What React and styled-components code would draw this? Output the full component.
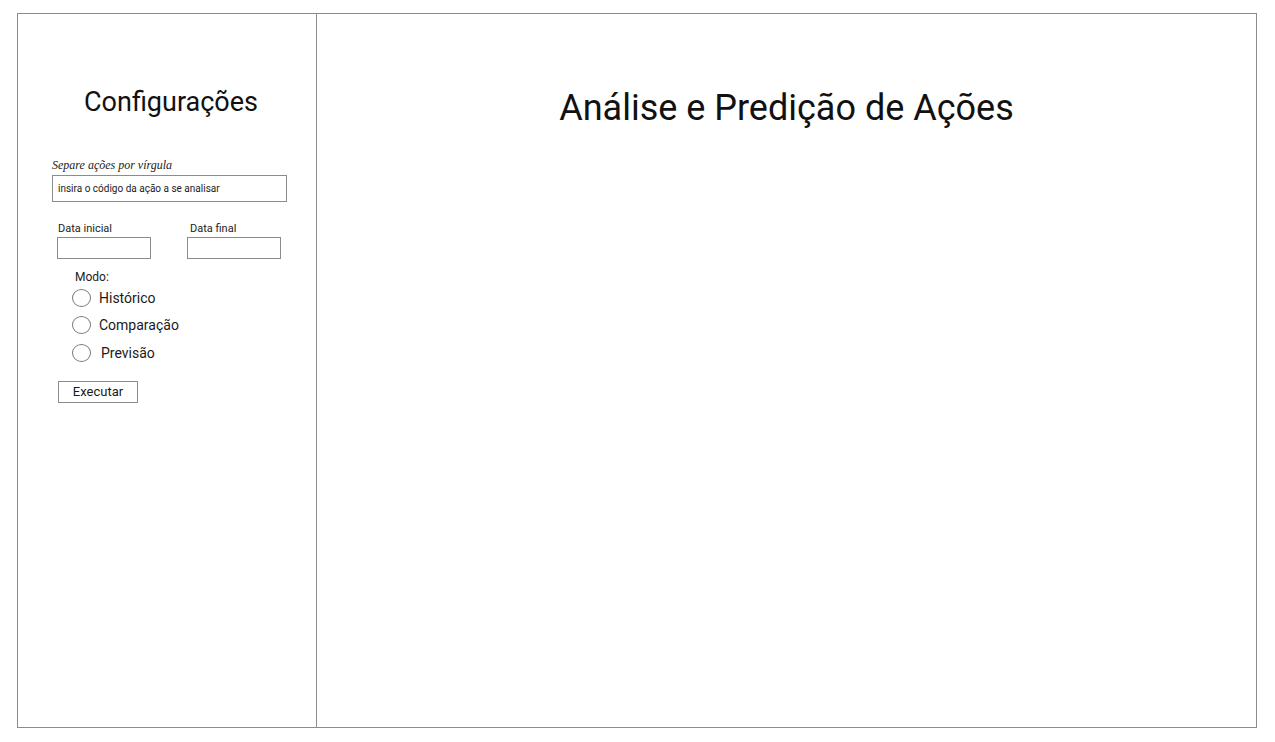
import React from "react";
import styled, { createGlobalStyle } from "styled-components";

const GlobalStyle = createGlobalStyle`
  html, body {
    margin: 0;
    padding: 0;
    background: #fff;
  }
  body {
    font-family: Roboto, "Liberation Sans", sans-serif;
    color: #1a1a1a;
  }
`;

const Frame = styled.div`
  box-sizing: border-box;
  margin: 13px 0 0 17px;
  width: 1240px;
  height: 715px;
  border: 1px solid #8c8c8c;
  display: flex;
`;

const Sidebar = styled.aside`
  box-sizing: border-box;
  width: 299px;
  flex-shrink: 0;
  border-right: 1px solid #8c8c8c;
  padding-top: 73px;
  display: flex;
  flex-direction: column;
`;

const Main = styled.main`
  flex: 1;
  padding-top: 73px;
`;

const SideTitle = styled.h2`
  margin: 0 0 41px 0;
  padding-left: 8px;
  font-weight: 400;
  font-size: 27px;
  line-height: 31px;
  text-align: center;
  color: #111;
`;

const MainTitle = styled.h1`
  margin: 0;
  font-weight: 400;
  font-size: 36px;
  line-height: 42px;
  text-align: center;
  color: #111;
`;

const Hint = styled.label`
  display: block;
  margin-left: 34px;
  font-family: "Liberation Serif", "DejaVu Serif", serif;
  font-style: italic;
  font-size: 12px;
  line-height: 13px;
  color: #222;
`;

const TickerInput = styled.input`
  box-sizing: border-box;
  margin: 3px 0 0 34px;
  width: 235px;
  height: 27px;
  border: 1px solid #8c8c8c;
  padding: 0 5px;
  font-family: Roboto, "Liberation Sans", sans-serif;
  font-size: 10px;
  outline: none;
  &::placeholder {
    color: #222;
  }
`;

const DateRow = styled.div`
  display: flex;
  gap: 36px;
  margin: 20px 0 0 39px;
`;

const DateField = styled.div`
  display: flex;
  flex-direction: column;
`;

const DateLabel = styled.label`
  font-size: 11px;
  line-height: 13px;
  padding-left: ${(p) => p.$indent || 1}px;
  color: #222;
`;

const DateBox = styled.input`
  box-sizing: border-box;
  margin-top: 2px;
  width: 94px;
  height: 22px;
  border: 1px solid #8c8c8c;
  outline: none;
`;

const ModeGroup = styled.fieldset`
  border: none;
  margin: 11px 0 0 54px;
  padding: 0;
  display: flex;
  flex-direction: column;
`;

const ModeLegend = styled.legend`
  padding: 0 0 0 3px;
  font-size: 12px;
  line-height: 14px;
  color: #222;
`;

const RadioRow = styled.label`
  display: flex;
  align-items: center;
  gap: ${(p) => p.$gap || 8}px;
  height: 27.5px;
  font-size: 14px;
  color: #1a1a1a;
`;

const Radio = styled.input.attrs({ type: "radio" })`
  appearance: none;
  box-sizing: border-box;
  margin: 0;
  width: 19px;
  height: 18px;
  border: 1px solid #7a7a7a;
  border-radius: 50%;
  background: #fff;
`;

const RunButton = styled.button`
  box-sizing: border-box;
  margin: 14px 0 0 40px;
  width: 80px;
  height: 22px;
  border: 1px solid #8c8c8c;
  background: #fff;
  padding: 0;
  font-family: Roboto, "Liberation Sans", sans-serif;
  font-size: 13px;
  color: #1a1a1a;
  align-self: flex-start;
`;

const modes = [
  { label: "Histórico", gap: 8 },
  { label: "Comparação", gap: 8 },
  { label: "Previsão", gap: 10 },
];

export default function App() {
  return (
    <>
      <GlobalStyle />
      <Frame>
        <Sidebar>
          <SideTitle>Configurações</SideTitle>
          <Hint htmlFor="tickers">Separe ações por vírgula</Hint>
          <TickerInput
            id="tickers"
            placeholder="insira o código da ação a se analisar"
          />
          <DateRow>
            <DateField>
              <DateLabel>Data inicial</DateLabel>
              <DateBox />
            </DateField>
            <DateField>
              <DateLabel $indent={3}>Data final</DateLabel>
              <DateBox />
            </DateField>
          </DateRow>
          <ModeGroup>
            <ModeLegend>Modo:</ModeLegend>
            {modes.map((m) => (
              <RadioRow key={m.label} $gap={m.gap}>
                <Radio name="modo" />
                {m.label}
              </RadioRow>
            ))}
          </ModeGroup>
          <RunButton>Executar</RunButton>
        </Sidebar>
        <Main>
          <MainTitle>Análise e Predição de Ações</MainTitle>
        </Main>
      </Frame>
    </>
  );
}
